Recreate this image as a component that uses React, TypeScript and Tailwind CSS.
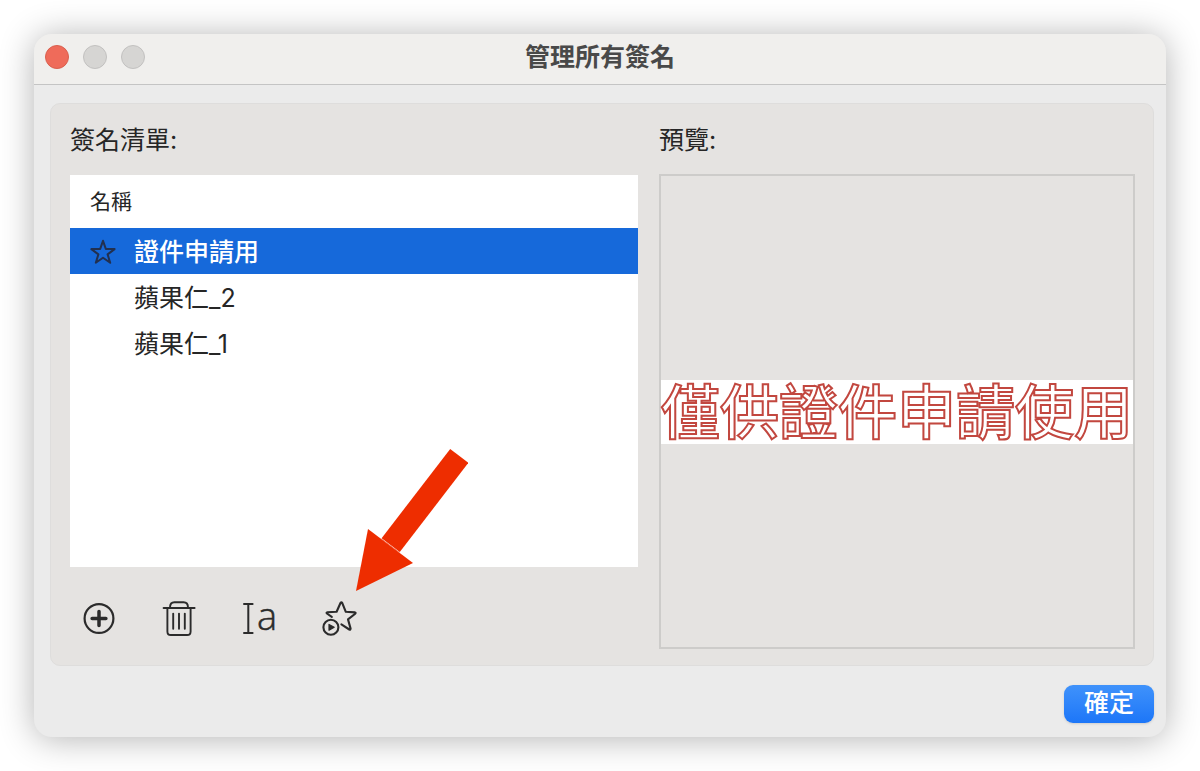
import { useState } from "react";
import type { ReactNode } from "react";
import clsx from "clsx";

type Signature = {
  id: string;
  name: string;
  isDefault: boolean;
};

const signatures: Signature[] = [
  { id: "apply", name: "證件申請用", isDefault: true },
  { id: "applealmond-2", name: "蘋果仁_2", isDefault: false },
  { id: "applealmond-1", name: "蘋果仁_1", isDefault: false },
];

function StarIcon() {
  return (
    <svg
      viewBox="0 0 26 26"
      className="h-[26px] w-[26px]"
      fill="none"
      stroke="#22304f"
      strokeWidth="2"
      strokeLinejoin="round"
    >
      <path d="M13 1.8 L15.8 9.9 L24.6 10.1 L17.6 15.4 L20.2 23.8 L13 18.8 L5.8 23.8 L8.4 15.4 L1.4 10.1 L10.2 9.9 Z" />
    </svg>
  );
}

function AddIcon() {
  return (
    <svg viewBox="0 0 36 36" className="h-9 w-9" fill="none" stroke="#2b2b2b">
      <circle cx="18" cy="18.5" r="14.4" strokeWidth="2.2" />
      <path d="M18 11.6v13.8M11.1 18.5h13.8" strokeWidth="3.5" strokeLinecap="round" />
    </svg>
  );
}

function TrashIcon() {
  return (
    <svg
      viewBox="0 0 36 36"
      className="h-9 w-9"
      fill="none"
      stroke="#2b2b2b"
      strokeWidth="1.9"
      strokeLinecap="round"
      strokeLinejoin="round"
    >
      <path d="M2.6 8h31" />
      <path d="M9 7.6c0-3.6 1.4-5.4 4.4-5.4h9.2c3 0 4.4 1.8 4.4 5.4" />
      <path d="M6.4 8v23.4c0 2.4 1.2 3.6 3.4 3.6h16.4c2.2 0 3.4-1.2 3.4-3.6V8" />
      <path d="M12.2 13.6v15.2M18 13.6v15.2M23.8 13.6v15.2" />
    </svg>
  );
}

function RenameIcon() {
  return (
    <svg viewBox="0 0 36 36" className="h-9 w-9 overflow-visible" fill="none">
      <path
        d="M3 4h8.6M7.3 4v29M3 33h8.6"
        stroke="#2b2b2b"
        strokeWidth="2"
        strokeLinecap="round"
      />
      <text
        x="16"
        y="30"
        fontSize="38"
        fontWeight="300"
        fill="#2b2b2b"
        stroke="#2b2b2b"
        strokeWidth="0.5"
        fontFamily='"Open Sans", "Noto Sans", sans-serif'
      >
        a
      </text>
    </svg>
  );
}

function DefaultStarIcon() {
  return (
    <svg
      viewBox="0 0 36 36"
      className="h-9 w-9"
      fill="none"
      stroke="#2b2b2b"
      strokeWidth="2.1"
      strokeLinecap="round"
      strokeLinejoin="round"
    >
      <path d="M10.8 16.8L5.9 13.5Q5 12.6 6.4 12.3L15.6 11.8L19.6 2.8Q20.4 1.6 21.2 2.8L24.8 11.8L34 12.4Q35.2 12.8 34.2 13.7L27 19.4L29.6 28.6Q29.6 30 28.3 29.5L20.4 24.4" />
      <circle cx="9.9" cy="27.3" r="7.5" />
      <path d="M8 24.4v5.8l5.2-2.9z" fill="#2b2b2b" strokeWidth="1.2" />
    </svg>
  );
}

function Arrow() {
  return (
    <svg
      viewBox="0 0 112 142"
      className="pointer-events-none absolute bottom-[45px] left-[35px] h-[142px] w-[112px]"
      fill="#ee2d00"
      aria-hidden="true"
    >
      <path d="M94.2 0L112.4 13.8L43.8 103L25.6 89.2Z" />
      <path d="M12 80L57 114L0 142Z" />
      <path d="M25.6 90.2L43.4 103.6" stroke="#f4512c" strokeWidth="0.8" />
    </svg>
  );
}

function ToolButton({ label, children }: { label: string; children: ReactNode }) {
  return (
    <button type="button" aria-label={label} className="relative h-9 w-9">
      {children}
    </button>
  );
}

function TitleBar() {
  return (
    <header className="grid h-[51px] grid-cols-[1fr_auto_1fr] items-center rounded-t-[18px] border-b border-[#c4c4c4] bg-[#f0efed] px-[11px] pb-1">
      <div className="flex gap-[14px]">
        <button
          type="button"
          aria-label="關閉"
          className="h-6 w-6 rounded-full border border-[#d9604f] bg-[#ef6b5a]"
        />
        <button
          type="button"
          aria-label="縮到最小"
          disabled
          className="h-6 w-6 rounded-full border border-[#c2c1c0] bg-[#d6d5d3]"
        />
        <button
          type="button"
          aria-label="放大"
          disabled
          className="h-6 w-6 rounded-full border border-[#c2c1c0] bg-[#d6d5d3]"
        />
      </div>
      <h1 className="text-[25px] leading-9 font-bold text-[#494949]">管理所有簽名</h1>
    </header>
  );
}

export default function App() {
  const [selectedId, setSelectedId] = useState("apply");

  return (
    <div className="min-h-screen bg-white p-[34px] font-['Inter','Noto_Sans_CJK_TC',sans-serif] text-[#262626]">
      <main className="rounded-[18px] bg-[#ebebeb] shadow-[0_2px_34px_rgba(0,0,0,0.3)]">
        <TitleBar />

        <div className="pt-[18px] pr-3 pb-[14px] pl-4">
          <div className="grid grid-cols-[568fr_476fr] gap-x-[21px] rounded-[10px] border border-[#dedddc] bg-[#e5e3e1] pt-[18px] pr-[18px] pb-4 pl-[19px]">
            <section className="flex flex-col">
              <h2 id="list-title" className="mb-[17px] text-[25px] leading-9">
                簽名清單:
              </h2>
              <div className="flex-1 bg-white">
                <table aria-labelledby="list-title" className="w-full text-left">
                  <thead>
                    <tr className="h-[53px]">
                      <th className="pl-5 text-[21px] font-normal" colSpan={2}>
                        名稱
                      </th>
                    </tr>
                  </thead>
                  <tbody>
                    {signatures.map((item) => (
                      <tr
                        key={item.id}
                        onClick={() => setSelectedId(item.id)}
                        className={clsx(
                          "h-[46px] text-[25px] leading-9",
                          item.id === selectedId && "bg-[#1669da] font-medium text-white",
                        )}
                      >
                        <td className="w-16 pt-0.5 pl-5">{item.isDefault && <StarIcon />}</td>
                        <td className="pt-0.5">{item.name}</td>
                      </tr>
                    ))}
                  </tbody>
                </table>
              </div>
              <div className="flex gap-11 px-[11px] pt-[33px] pb-[13px]">
                <ToolButton label="新增">
                  <AddIcon />
                </ToolButton>
                <ToolButton label="刪除">
                  <TrashIcon />
                </ToolButton>
                <ToolButton label="重新命名">
                  <RenameIcon />
                </ToolButton>
                <ToolButton label="設為預設">
                  <DefaultStarIcon />
                  <Arrow />
                </ToolButton>
              </div>
            </section>

            <section>
              <h2 className="mb-4 text-[25px] leading-9">預覽:</h2>
              <div className="flex aspect-[476/475] items-center justify-center border-2 border-[#cdccca]">
                <p className="h-16 w-full bg-white text-center font-['Noto_Sans_CJK_TC',sans-serif] text-[59px] leading-[58px] font-medium whitespace-nowrap text-white [-webkit-text-stroke:2px_#c2473f]">
                  僅供證件申請使用
                </p>
              </div>
            </section>
          </div>

          <div className="mt-[19px] flex justify-end">
            <button
              type="button"
              className="h-[38px] w-[90px] rounded-[9px] bg-linear-to-b from-[#3f92fb] to-[#1c76f8] pb-0.5 text-[25px] leading-9 font-medium text-white shadow-sm"
            >
              確定
            </button>
          </div>
        </div>
      </main>
    </div>
  );
}
